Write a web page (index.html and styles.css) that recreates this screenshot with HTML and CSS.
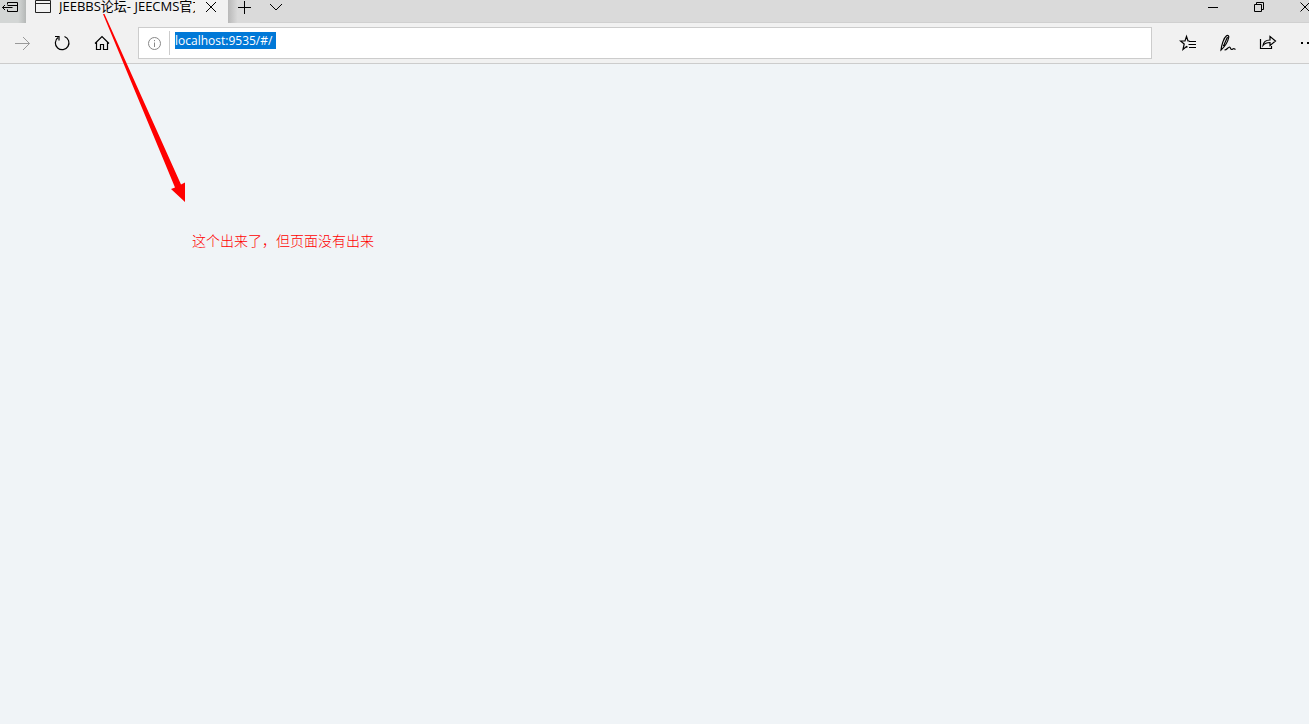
FILE: index.html
```
<!DOCTYPE html>
<html lang="zh-CN">
<head>
	<meta charset="UTF-8">
	<title>JEEBBS论坛- JEECMS官方</title>
	<link rel="stylesheet" href="styles.css">
</head>
<body>
	<div class="tabbar">
		<button class="setaside" aria-label="搁置标签页">
			<svg width="20" height="14" viewBox="0 0 20 14"><path d="M7.500 4.500v-2h10v9h-10v-2M7.500 5.500h10M2.500 7.500h10M5 5l-2.500 2.500L5 10"/></svg>
		</button>
		<div class="tab">
			<svg width="16" height="14" viewBox="0 0 16 14"><path d="M.5 .5h15v12h-15zM.5 3.500h15"/></svg>
			<span class="title">JEEBBS论坛- JEECMS官方</span>
			<button class="close" aria-label="关闭标签页">
				<svg width="12" height="12" viewBox="0 0 12 12"><path d="M1 1l10 10M11 1l-10 10"/></svg>
			</button>
		</div>
		<button class="tool" aria-label="新建标签页">
			<svg width="14" height="14" viewBox="0 0 14 14"><path d="M7.500 1v13M1 7.500h13"/></svg>
		</button>
		<button class="tool" aria-label="标签页预览">
			<svg width="14" height="14" viewBox="0 0 14 14"><path d="M1 4l6 6l6-6"/></svg>
		</button>
		<div class="window">
			<button aria-label="最小化"><svg width="12" height="12" viewBox="0 0 12 12"><path d="M1 6.500h10"/></svg></button>
			<button aria-label="还原"><svg width="12" height="12" viewBox="0 0 12 12"><path d="M1.500 3.500h7v7h-7zM3.500 3.500v-2h7v7h-2"/></svg></button>
			<button aria-label="关闭"><svg width="12" height="12" viewBox="0 0 12 12"><path d="M1.500 1.500l9 9M10.500 1.500l-9 9"/></svg></button>
		</div>
	</div>
	<div class="toolbar">
		<div class="nav">
			<button disabled aria-label="前进"><svg width="18" height="18" viewBox="0 0 18 18"><path d="M2 9.500h14.500M10 3l6.500 6.500l-6.500 6.500"/></svg></button>
			<button aria-label="刷新"><svg width="18" height="18" viewBox="0 0 18 18"><path d="M11.500 2.500a6.800 6.800 0 1 1-6.500 1M2 2.500h4v4" stroke-width="1.200"/></svg></button>
			<button aria-label="主页"><svg width="18" height="18" viewBox="0 0 18 18"><path d="M2 9.500l7-7l7 7M3.500 8v7.500h4v-5h3v5h4v-7.500" stroke-width="1.200"/></svg></button>
		</div>
		<div class="address">
			<button class="info" aria-label="网站信息">
				<svg width="14" height="14" viewBox="0 0 14 14"><circle cx="7.500" cy="7.500" r="6"/><path d="M7.500 6.500v4.500M7.500 4v1.200"/></svg>
			</button>
			<input type="text" id="url" aria-label="地址" value="localhost:9535/#/ " autofocus>
		</div>
		<div class="actions">
			<button aria-label="收藏夹"><svg width="18" height="18" viewBox="0 0 18 18"><path d="M10.500 7H9L7.500 2.500L6 7H1.500l3.700 3L4 15.500L7.500 12.500l1 .8M10 7.500h7M9.500 10.500h7.500M10 13.500h7" stroke-width="1.200"/></svg></button>
			<button aria-label="添加笔记"><svg width="18" height="18" viewBox="0 0 18 18"><path d="M2 16C2.500 11 5 3.500 7.500 1.700c1.500-.8 2.600.3 2.200 1.800C9 7 6.500 12 2 16zM4 11.500l2 .8M8.500 3L4.500 12M5.500 16c2.500-.3 3.500-2.800 5-3c1.300 0 .8 2.500 2.200 2.500c1 0 1.500-1.200 2.500-.8l1.300.8" stroke-width="1.200"/></svg></button>
			<button aria-label="共享"><svg width="18" height="18" viewBox="0 0 18 18"><path d="M1.500 5v9.500h11v-2.500M4 11.500c.5-4 3-5.500 7-5.500V2.500L16.500 7L11 11.500V8.500c-3 0-5 .5-7 3z" stroke-width="1.200"/></svg></button>
			<button aria-label="更多"><svg width="18" height="18" viewBox="0 0 18 18"><path d="M2 9h2M8 9h2M14 9h2" stroke-width="2"/></svg></button>
		</div>
	</div>
	<main class="page">
		<p class="note">这个出来了，但页面没有出来</p>
	</main>
	<svg class="arrow" width="90" height="196" viewBox="0 0 90 196"><path d="M4 6L5.500 6L82 176.500L86 174.500L86 194L72 181L76 179.500z"/></svg>
	<script>
		document.getElementById('url').select();
	</script>
</body>
</html>
```
FILE: styles.css
```
*{ box-sizing: border-box; margin: 0; padding: 0;}
body{ display: flex; flex-direction: column; min-height: 100vh; overflow: hidden; background: #f0f4f7; font-family: "Open Sans", "Noto Sans CJK SC", sans-serif; font-size: 13px; color: #000;}
button{ display: flex; flex: none; align-items: center; justify-content: center; border: 0; background: none; color: #000;}
svg{ display: block; flex: none; fill: none; stroke: currentColor;}

.tabbar{ display: flex; height: 23px; background: #dadada; border-bottom: 1px solid #d0d0d0;}
.tabbar button{ height: 14px;}
.tabbar .setaside{ width: 26px; height: 23px; padding: 0 6px 9px 0; background: linear-gradient(to right, #d3d6d5 70%, #b5b8b7);}
.tab{ display: flex; flex: none; align-items: flex-start; width: 202px; height: 23px; padding-left: 9px; background: #f1f1f1; color: #222;}
.title{ width: 136px; height: 17px; margin: -2px 0 0 8px; line-height: 17px; overflow: hidden; white-space: nowrap; color: #000;}
.tab .close{ width: 32px;}
.tool{ width: 32px;}
.tab + .tool{ height: 23px; padding-bottom: 9px; background: linear-gradient(to right, #b8b8b8, #dadada 30%);}
.window{ display: flex; flex: none; width: 119px; margin-left: auto; overflow: hidden;}
.window button{ width: 46px;}

.toolbar{ display: flex; height: 41px; background: #f1f1f1; border-bottom: 1px solid #ccc;}
.toolbar button{ width: 40px; height: 40px;}
.nav{ display: flex; flex: none; width: 138px; padding-left: 2px;}
.nav button:disabled{ color: #999;}
.address{ display: flex; flex: 1; align-items: center; height: 32px; margin-top: 4px; background: #fff; border: 1px solid #ccc;}
.address .info{ width: 31px; height: 24px; border-right: 1px solid #ccc; color: #888;}
.address svg{ overflow: visible;}
.address input{ flex: 1; height: 24px; min-width: 0; padding: 0 5px 5px; border: 0; outline: 0; background: none; font: 12px "Open Sans", sans-serif;}
.address input::selection{ background: #0078d7; color: #fff;}
.actions{ display: flex; flex: none; width: 157px; padding-left: 16px; overflow: hidden;}

.page{ flex: 1; padding: 166px 192px;}
.note{ font-size: 14px; font-weight: 300; line-height: 22px; color: #f00;}
.arrow{ position: absolute; left: 99px; top: 8px; fill: #f00; stroke: none;}
```
